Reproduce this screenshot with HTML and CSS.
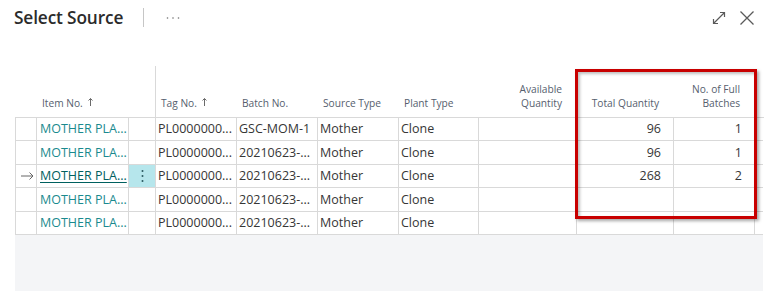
FILE: index.html
```html
<!DOCTYPE html>
<html>
<head>
<meta charset="utf-8">
<link rel="stylesheet" href="styles.css">
</head>
<body>
<div class="dialog">
  <header class="titlebar">
    <h1 class="title">Select Source</h1>
    <span class="sep"></span>
    <svg class="more" width="14" height="4" viewBox="0 0 14 4"><circle cx="1.5" cy="2" r="0.8"/><circle cx="7" cy="2" r="0.8"/><circle cx="12.5" cy="2" r="0.8"/></svg>
    <span class="spacer"></span>
    <svg class="icon" width="14" height="14" viewBox="0 0 14 14"><path d="M1.5 12.5 L12.5 1.5 M8 1.5 H12.5 V6 M1.5 8 V12.5 H6"/></svg>
    <svg class="icon close" width="14" height="14" viewBox="0 0 14 14"><path d="M0.5 0.5 L13.5 13.5 M13.5 0.5 L0.5 13.5"/></svg>
  </header>

  <div class="content">
    <div class="grid">
      <div class="hc"></div>
      <div class="hc">Item No.<svg class="sort" width="5" height="8" viewBox="0 0 5 8"><path d="M2.5 0.5 V8 M0.5 2.5 L2.5 0.5 L4.5 2.5"/></svg></div>
      <div class="hc frozen"></div>
      <div class="hc">Tag No.<svg class="sort" width="5" height="8" viewBox="0 0 5 8"><path d="M2.5 0.5 V8 M0.5 2.5 L2.5 0.5 L4.5 2.5"/></svg></div>
      <div class="hc">Batch No.</div>
      <div class="hc">Source Type</div>
      <div class="hc">Plant Type</div>
      <div class="hc num">Available<br>Quantity</div>
      <div class="hc num">Total Quantity</div>
      <div class="hc num">No. of Full<br>Batches</div>
      <div class="hc"></div>

      <div class="c first"></div>
      <div class="c link">MOTHER PLA...</div>
      <div class="c"></div>
      <div class="c">PL0000000...</div>
      <div class="c">GSC-MOM-1</div>
      <div class="c">Mother</div>
      <div class="c">Clone</div>
      <div class="c"></div>
      <div class="c num">96</div>
      <div class="c num">1</div>
      <div class="c last"></div>

      <div class="c first"></div>
      <div class="c link">MOTHER PLA...</div>
      <div class="c"></div>
      <div class="c">PL0000000...</div>
      <div class="c">20210623-...</div>
      <div class="c">Mother</div>
      <div class="c">Clone</div>
      <div class="c"></div>
      <div class="c num">96</div>
      <div class="c num">1</div>
      <div class="c last"></div>

      <div class="c first arrowcell"><svg width="13" height="8" viewBox="0 0 13 8"><path d="M0 4 H12 M8.5 0.5 L12 4 L8.5 7.5"/></svg></div>
      <div class="c link sel">MOTHER PLA...</div>
      <div class="c menu"><svg width="3" height="14" viewBox="0 0 3 14"><circle cx="1.5" cy="2" r="1"/><circle cx="1.5" cy="7" r="1"/><circle cx="1.5" cy="12" r="1"/></svg></div>
      <div class="c">PL0000000...</div>
      <div class="c">20210623-...</div>
      <div class="c">Mother</div>
      <div class="c">Clone</div>
      <div class="c"></div>
      <div class="c num">268</div>
      <div class="c num">2</div>
      <div class="c last"></div>

      <div class="c first"></div>
      <div class="c link">MOTHER PLA...</div>
      <div class="c"></div>
      <div class="c">PL0000000...</div>
      <div class="c">20210623-...</div>
      <div class="c">Mother</div>
      <div class="c">Clone</div>
      <div class="c"></div>
      <div class="c num"></div>
      <div class="c num"></div>
      <div class="c last"></div>

      <div class="c first"></div>
      <div class="c link">MOTHER PLA...</div>
      <div class="c"></div>
      <div class="c">PL0000000...</div>
      <div class="c">20210623-...</div>
      <div class="c">Mother</div>
      <div class="c">Clone</div>
      <div class="c"></div>
      <div class="c num"></div>
      <div class="c num"></div>
      <div class="c last"></div>
    </div>
    <div class="filler"></div>
  </div>

  <div class="highlight"></div>
</div>
</body>
</html>
```

FILE: styles.css
```css
* { box-sizing: border-box; }
html, body { margin: 0; padding: 0; background: #fff; }
body {
  font-family: "Open Sans", "Noto Sans", sans-serif;
  color: #262626;
  width: 773px;
  height: 291px;
  overflow: hidden;
}
.dialog {
  position: relative;
  height: 291px;
  display: flex;
  flex-direction: column;
}
.titlebar {
  height: 66px;
  display: flex;
  align-items: flex-start;
  padding: 4px 19px 0 14px;
}
.title {
  margin: 0;
  font-size: 17.3px;
  font-weight: 600;
  line-height: 28px;
  color: #2b2b2b;
  letter-spacing: -0.15px;
}
.sep {
  width: 1px;
  height: 19px;
  background: #c6c6c6;
  margin: 4px 0 0 20px;
}
.more {
  fill: #707070;
  margin: 12px 0 0 22px;
}
.spacer { flex: 1; }
.icon {
  fill: none;
  stroke: #5a5a5a;
  stroke-width: 1.2;
  margin-top: 7px;
}
.icon.close { margin-left: 14px; stroke-width: 1.3; }

.content {
  margin-left: 15px;
  width: 748px;
  flex: 1;
  display: flex;
  flex-direction: column;
}
.grid {
  display: grid;
  grid-template-columns: 22px 92px 27px 81px 81px 81px 80px 98px 97px 81px 8px;
  grid-template-rows: 52px 23px 24px 23px 24px 23px;
}
.hc {
  border-bottom: 1px solid #d9d9d9;
  font-size: 10.2px;
  line-height: 14px;
  color: #56606e;
  padding: 0 4px 7px 5px;
  display: flex;
  align-items: flex-end;
}
.hc.num { justify-content: flex-end; text-align: right; padding-right: 15px; }
.hc.frozen { border-right: 1px solid #d9d9d9; }
.sort {
  fill: none;
  stroke: #6a6a6a;
  stroke-width: 1;
  margin: 0 0 4px 5px;
}
.c {
  border-right: 1px solid #d9d9d9;
  border-bottom: 1px solid #d9d9d9;
  font-size: 12.5px;
  color: #363636;
  padding: 0 2px 1px 2px;
  display: flex;
  align-items: center;
  white-space: nowrap;
  overflow: hidden;
  background: #fff;
}
.c.first { border-left: 1px solid #d9d9d9; }
.c.last { border-right: none; }
.c.num { justify-content: flex-end; padding-right: 12px; }
.c.link { color: #1a8a8e; padding-left: 3px; }
.c.link.sel { color: #00605f; text-decoration: underline; text-underline-offset: 2px; }
.c.menu { background: #b6e6ec; justify-content: center; fill: #2a5960; }
.arrowcell { justify-content: center; padding: 0 0 1px 2px; }
.arrowcell svg { fill: none; stroke: #666; stroke-width: 1; }
.filler {
  flex: 1;
  background: #f4f5f7;
}
.highlight {
  position: absolute;
  left: 575px;
  top: 69px;
  width: 182px;
  height: 150px;
  border: 3px solid #c80000;
  box-shadow: 2px 2px 3px rgba(0,0,0,0.35), inset 2px 2px 3px rgba(0,0,0,0.25);
  pointer-events: none;
}
```
